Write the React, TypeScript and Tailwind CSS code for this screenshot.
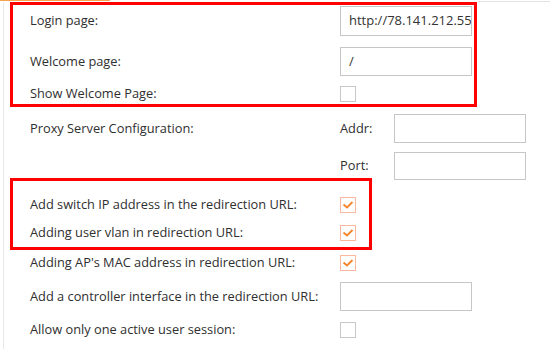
const font = { fontFamily: '"Open Sans", "Noto Sans", sans-serif' };

function TextBox({ value = "", w = "w-[132px]", h = "h-[30px]" }: { value?: string; w?: string; h?: string }) {
  return (
    <div className={`${w} ${h} border border-[#c6c6c6] bg-white flex items-center pl-[8px] overflow-hidden whitespace-nowrap text-[13px] text-[#333]`}>
      {value}
    </div>
  );
}

function Check({ checked = false }: { checked?: boolean }) {
  return (
    <div
      className={`w-[16px] h-[16px] border bg-white flex items-center justify-center ${
        checked ? "border-[#fbb8a0]" : "border-[#c8c8c8]"
      }`}
    >
      {checked && (
        <svg width="12" height="10" viewBox="0 0 12 10">
          <polyline points="1.5,4.5 5,7.5 10.5,2" fill="none" stroke="#f5842a" strokeWidth="1.8" />
        </svg>
      )}
    </div>
  );
}

function Row({ label, children, h, className = "" }: { label: string; children: React.ReactNode; h: string; className?: string }) {
  return (
    <div className={`flex items-center ${h} ${className}`}>
      <div className="w-[310px] shrink-0 whitespace-nowrap text-[12.8px]">{label}</div>
      {children}
    </div>
  );
}

export default function App() {
  return (
    <div className="w-[550px] h-[349px] bg-white overflow-hidden text-[12.8px] text-[#2f2f2f]" style={font}>
      {/* tab strip remains */}
      <div className="flex h-[2px]">
        <div className="w-[110px] border-t border-[#f7a24f]" />
        <div className="flex-1" />
        <div className="w-[72px] border-b border-[#e3e3e3]" />
      </div>

      <div className="ml-[3px] border-l border-[#e8e8e8] h-[347px]">
        {/* Login / welcome */}
        <div className="ml-[6px] w-[467px] border-[3px] border-[#ff0000] pl-[17px] pt-[1px] pb-[2px]">
          <Row label="Login page:" h="h-[30px]">
            <TextBox value="http://78.141.212.55" />
          </Row>
          <Row label="Welcome page:" h="h-[29px]" className="mt-[11px]">
            <TextBox value="/" h="h-[29px]" />
          </Row>
          <Row label="Show Welcome Page:" h="h-[16px]" className="mt-[10px]">
            <Check />
          </Row>
        </div>

        {/* Proxy */}
        <div className="pl-[26px]">
          <Row label="Proxy Server Configuration:" h="h-[29px]" className="mt-[7px]">
            <div className="w-[54px]">Addr:</div>
            <TextBox h="h-[29px]" />
          </Row>
          <Row label="" h="h-[28px]" className="mt-[9px]">
            <div className="w-[54px]">Port:</div>
            <TextBox h="h-[28px]" />
          </Row>
        </div>

        {/* Redirection flags */}
        <div className="ml-[6px] -mt-[2px] w-[362px] border-[3px] border-[#ff0000] pl-[17px] pt-[16px] pb-[6px]">
          <Row label="Add switch IP address in the redirection URL:" h="h-[16px]">
            <Check checked />
          </Row>
          <Row label="Adding user vlan in redirection URL:" h="h-[16px]" className="mt-[12px]">
            <Check checked />
          </Row>
        </div>

        <div className="pl-[26px]">
          <Row label="Adding AP's MAC address in redirection URL:" h="h-[16px]" className="mt-[5px]">
            <Check checked />
          </Row>
          <Row label="Add a controller interface in the redirection URL:" h="h-[29px]" className="mt-[11px]">
            <TextBox h="h-[29px]" />
          </Row>
          <Row label="Allow only one active user session:" h="h-[16px]" className="mt-[11px]">
            <Check />
          </Row>
        </div>
      </div>
    </div>
  );
}
